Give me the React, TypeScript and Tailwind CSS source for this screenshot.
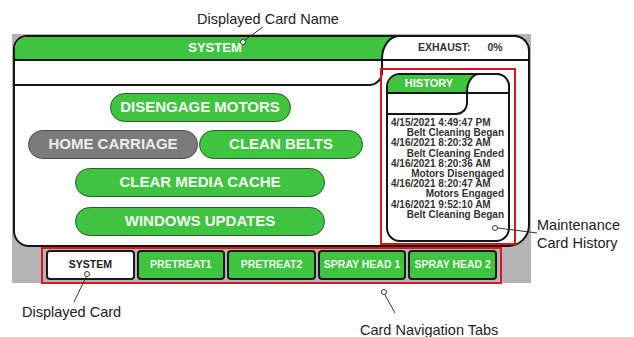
import React from "react";

/**
 * Annotated maintenance screen — the SYSTEM card with its action buttons,
 * a history card on the right and the card tabs along the bottom, plus the
 * callouts that label each part.
 */

const GREEN = "bg-[#3ec43e]";

const history: [string, string][] = [
  ["4/15/2021 4:49:47 PM", "Belt Cleaning Began"],
  ["4/16/2021 8:20:32 AM", "Belt Cleaning Ended"],
  ["4/16/2021 8:20:36 AM", "Motors Disengaged"],
  ["4/16/2021 8:20:47 AM", "Motors Engaged"],
  ["4/16/2021 9:52:10 AM", "Belt Cleaning Began"],
];

const tabs = ["SYSTEM", "PRETREAT1", "PRETREAT2", "SPRAY HEAD 1", "SPRAY HEAD 2"];

function Pill({ label, width, gray }: { label: string; width: string; gray?: boolean }) {
  return (
    <div
      className={`flex h-[29px] shrink-0 items-center justify-center rounded-full border text-[15px] font-bold ${width} ${
        gray ? "border-[#4a4a4a] bg-[#7b7b7b] text-[#ededed]" : "border-[#2f5a2f] bg-[#3ec43e] text-[#f6f6f6]"
      }`}
    >
      {label}
    </div>
  );
}

function HistoryCard() {
  return (
    <div className="flex h-[169px] w-[124px] flex-col rounded-[14px] border-2 border-[#161616] bg-white">
      <div className="flex h-[19px] shrink-0 rounded-t-[12px] border-b-2 border-[#161616] bg-[#3ec43e]">
        <div className="flex w-[78px] items-center justify-center pl-[4px] text-[11px] font-bold text-white">
          HISTORY
        </div>
        <div className="-mr-[2px] -mt-[2px] flex-1 rounded-tl-[14px_20px] rounded-tr-[14px] border-l-2 border-r-2 border-t-2 border-[#161616] bg-white" />
      </div>
      <div className="h-[21px] w-[80px] shrink-0 rounded-br-[12px] border-b-2 border-r-2 border-[#161616]" />
      <div className="flex flex-col pl-[3px] pr-[4px] pt-[3px] text-[10px] font-bold leading-[10.2px] text-[#333]">
        {history.map(([when, what]) => (
          <React.Fragment key={when}>
            <span>{when}</span>
            <span className="text-right">{what}</span>
          </React.Fragment>
        ))}
      </div>
    </div>
  );
}

function SystemCard() {
  return (
    <div className="mt-px flex h-[215px] w-[517px] flex-col rounded-bl-[16px] rounded-br-[22px] rounded-tl-[14px] rounded-tr-[16px] border-2 border-[#161616] bg-white">
      {/* card title row */}
      <div className={`flex h-[24px] shrink-0 rounded-tl-[12px] rounded-tr-[14px] border-b-2 border-[#161616] ${GREEN}`}>
        <div className="flex w-[366px] items-center justify-center pl-[34px] text-[13px] font-bold text-white">SYSTEM</div>
        <div className="-mr-[2px] -mt-[2px] flex flex-1 items-center gap-[17px] rounded-tl-[18px_24px] rounded-tr-[16px] border-l-2 border-r-2 border-t-2 border-[#161616] bg-white pl-[35px] text-[10.5px] font-bold text-[#333]">
          <span>EXHAUST:</span>
          <span>0%</span>
        </div>
      </div>

      <div className="flex flex-1">
        {/* buttons */}
        <div className="flex w-[368px] shrink-0 flex-col">
          <div className="h-[25px] shrink-0 rounded-br-[14px] border-b-2 border-r-2 border-[#161616]" />
          <div className="flex flex-col items-center pl-[2px]">
            <div className="mt-[7px]">
              <Pill label="DISENGAGE MOTORS" width="w-[181px]" />
            </div>
            <div className="mr-[9px] mt-[8px] flex gap-px">
              <Pill label="HOME CARRIAGE" width="w-[170px]" gray />
              <Pill label="CLEAN BELTS" width="w-[164px]" />
            </div>
            <div className="mt-[9px]">
              <Pill label="CLEAR MEDIA CACHE" width="w-[250px]" />
            </div>
            <div className="mt-[10px]">
              <Pill label="WINDOWS UPDATES" width="w-[250px]" />
            </div>
          </div>
        </div>

        {/* history, boxed in red */}
        <div className="-ml-[3px] mt-[7px] h-[177px] w-[136px] border-2 border-[#e0141a] pl-[4px] pt-[3px]">
          <HistoryCard />
        </div>
      </div>
    </div>
  );
}

export default function App() {
  return (
    <div className="relative h-[337px] w-[634px] overflow-hidden bg-white pl-[12px] pt-[34px] font-['Liberation_Sans',Arial,sans-serif]">
      <div className="flex h-[249px] w-[519px] flex-col bg-[#b4b4b4] pl-px">
        <SystemCard />
        <div className="ml-[28px] flex h-[37px] w-[461px] shrink-0 gap-[2px] border-2 border-[#e0141a] pl-[3px] pt-px">
          {tabs.map((t, i) => (
            <div
              key={t}
              className={`flex h-[30px] w-[88.6px] items-center justify-center rounded-[4px] border-2 border-[#1a1a1a] text-[10.5px] font-bold ${
                i === 0 ? "bg-white text-[#222]" : "bg-[#3ec43e] text-[#f4f4f4]"
              }`}
            >
              {t}
            </div>
          ))}
        </div>
      </div>

      {/* callouts */}
      <svg className="pointer-events-none absolute left-0 top-0" width="634" height="337">
        <g stroke="#333" strokeWidth="1" fill="none">
          <line x1="245" y1="40" x2="263" y2="27" />
          <line x1="86" y1="277" x2="74" y2="302" />
          <line x1="385" y1="295" x2="395" y2="313" />
          <line x1="498" y1="228" x2="537" y2="233" />
        </g>
        <g stroke="#333" strokeWidth="1" fill="white">
          <circle cx="243" cy="42" r="2.5" />
          <circle cx="87" cy="274" r="2.5" />
          <circle cx="384" cy="292" r="2.5" />
          <circle cx="495" cy="228" r="2.5" />
        </g>
      </svg>
      <span className="absolute left-[197px] top-[9px] text-[14.5px] text-[#222]">Displayed Card Name</span>
      <span className="absolute left-[22px] top-[302px] text-[14.5px] text-[#222]">Displayed Card</span>
      <span className="absolute left-[360px] top-[320px] text-[14.5px] text-[#222]">Card Navigation Tabs</span>
      <div className="absolute left-[537px] top-[216px] flex flex-col text-[14.5px] leading-[18px] text-[#222]">
        <span>Maintenance</span>
        <span>Card History</span>
      </div>
    </div>
  );
}
